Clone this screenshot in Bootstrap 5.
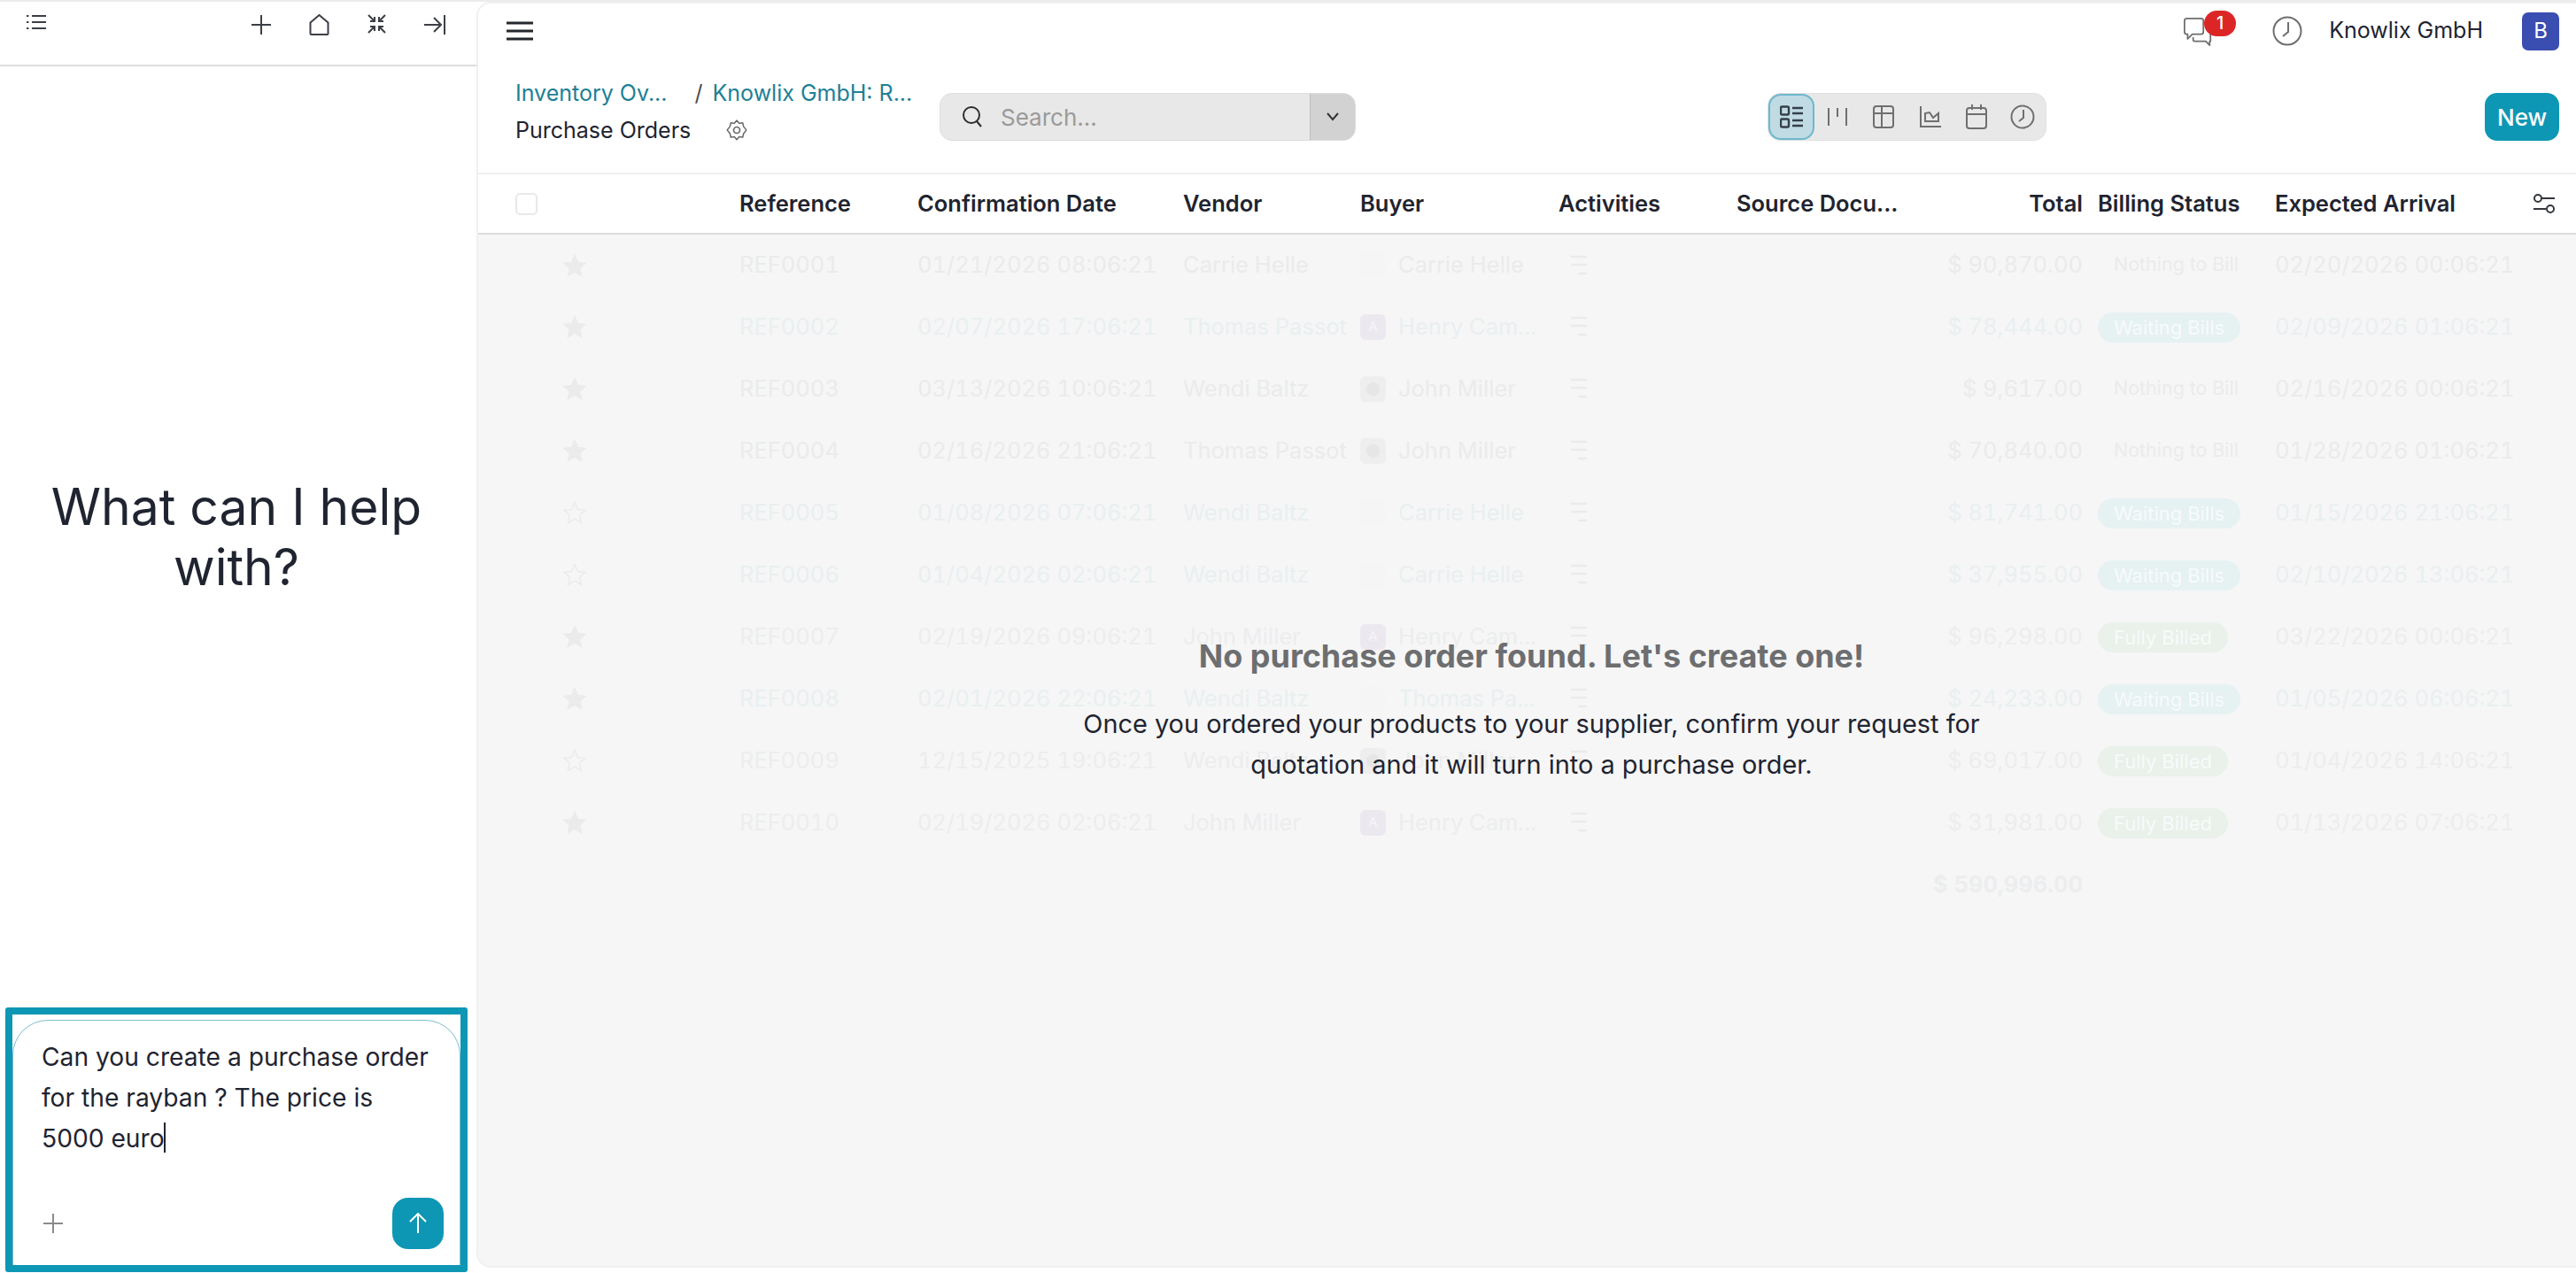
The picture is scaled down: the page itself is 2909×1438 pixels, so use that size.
<!DOCTYPE html>
<html lang="en">
<head>
    <meta charset="UTF-8">
    <meta name="viewport" content="width=device-width, initial-scale=1.0">
    <title>Purchase Orders</title>
    <link href="https://cdn.jsdelivr.net/npm/bootstrap@5.3.1/dist/css/bootstrap.min.css" rel="stylesheet">
    <style>
        html, body { height: 100%; }
        body { font-family: "Inter", "Liberation Sans", sans-serif; font-size: 25px; color: #1f2430; background: #fff; overflow: hidden; }
        svg { display: block; flex-shrink: 0; }
        .app-shell { height: 1438px; border-top: 2px solid #ececec; }

        .side-pane { width: 538px; flex-shrink: 0; }
        .side-top { height: 73px; border-bottom: 2px solid #dedede; padding: 14px 35px 0 30px; color: #3b3f46; }
        .side-tools { gap: 43px; }
        .help-title { font-size: 57px; font-weight: 400; line-height: 68px; color: #1f2430; margin: 0 4px 0 0; width: 460px; }
        .chat-frame { margin: 0 10px 1px 6px; height: 299px; border: 8px solid #0e97b4; border-radius: 3px; padding-top: 6px; overflow: hidden; }
        .chat-box { height: 320px; border: 1px solid #7cbccd; border-radius: 40px; padding: 18px 18px 0 32px; }
        .chat-text { font-size: 28.2px; line-height: 46px; color: #1f2430; height: 182px; padding-right: 12px; }
        .caret-bar { display: inline-block; width: 2px; height: 34px; background: #1f2430; vertical-align: -6px; margin-left: -1px; }
        .chat-plus { margin-left: 2px; }
        .send-btn { width: 58px; height: 58px; border-radius: 18px; background: #0e97b4; border: 0; padding: 0; }

        .main-pane { height: 1430px; border: 2px solid #f0f0f0; border-right: 0; border-radius: 16px 0 0 16px; overflow: hidden; min-width: 0; }
        .top-row { height: 62px; padding: 0 19px 0 32px; }
        .menu-bars { width: 30px; }
        .chat-alert { margin-right: 68px; }
        .note-badge { position: absolute; top: -6px; left: 23px; width: 36px; height: 29px; border-radius: 15px; background: #dc2626; color: #fff; font-size: 20px; line-height: 29px; text-align: center; font-weight: 500; }
        .company-name { margin-left: 30px; margin-right: 44px; color: #1f2430; }
        .user-tile { width: 42px; height: 43px; border-radius: 7px; background: #3a4db0; color: #fff; font-size: 24px; }
        .control-row { height: 131px; border-bottom: 2px solid #efefef; padding: 18px 19px 0 42px; }
        .crumb-col { width: 479px; flex-shrink: 0; }
        .crumb-link { color: #1e8096; }
        .crumb-sep { color: #4d4d4d; margin: 0 11px 0 31px; }
        .crumb-line { line-height: 42px; height: 42px; }
        .page-name { width: 238px; color: #1f2430; }
        .search-bar { width: 470px; height: 54px; margin-top: 21px; background: #e8e8e8; border: 1px solid #dcdcdc; border-radius: 14px; overflow: hidden; }
        .search-hint { color: #9a9a9a; margin-left: 20px; font-size: 26px; }
        .search-drop { width: 51px; background: #d2d2d2; border-left: 1px solid #bdbdbd; }
        .view-switch { margin-left: 465px; margin-top: 21px; width: 315px; height: 54px; background: #e8e8e8; border-radius: 14px; border: 1px solid #e0e0e0; }
        .view-btn { width: 52.5px; height: 52px; color: #6f6f6f; }
        .view-on { background: #c0dbe3; border: 2px solid #6db8cc; border-radius: 14px; color: #34404a; }
        .new-btn { width: 84px; height: 54px; margin-top: 21px; border-radius: 14px; background: #0e97b4; color: #fff; font-size: 26px; font-weight: 500; border: 0; padding: 0; }

        .list-wrap { background: #f6f6f6; flex-grow: 1; }
        .po-table { table-layout: fixed; width: 2369px; margin: 0; background: transparent; --bs-table-bg: transparent; font-size: 25.5px; }
        .po-table th { height: 67px; background: #fff; padding: 0; vertical-align: middle; font-weight: 600; font-size: 25.5px; color: #1f2430; border-bottom: 2px solid #dcdcdc; white-space: nowrap; }
        .po-table td { height: 70px; padding: 0; vertical-align: middle; white-space: nowrap; color: #eaebeb; background: transparent; overflow: hidden; font-variant-numeric: tabular-nums; }
        .po-table tr.row-wait td { color: #e9eff1; }
        .po-table tr.row-done td { color: #ecedee; }
        .po-table tr.row-sum td { font-weight: 700; color: #ecedee; }
        .col-check { width: 92px; padding-left: 42px !important; }
        .col-star { width: 203px; }
        .col-ref { width: 201px; }
        .col-date { width: 300px; }
        .col-vendor { width: 200px; }
        .col-buyer { width: 224px; }
        .col-act { width: 201px; }
        .col-source { width: 200px; }
        .col-total { width: 208px; padding-right: 17px !important; text-align: right; }
        .col-bill { width: 200px; }
        .col-arrive { width: 291px; }
        .col-tune { width: 49px; }
        .tick-box { width: 25px; height: 25px; border: 2px solid #e9e9e9; border-radius: 5px; background: #fff; }
        .star-cell { padding-left: 4px !important; }
        .act-cell { padding-left: 12px !important; }
        .buyer-wrap { gap: 14px; }
        .buyer-tile { width: 29px; height: 29px; border-radius: 6px; font-size: 15px; flex-shrink: 0; }
        .tile-pink { background: #ece8ef; color: #f6f6f6; }
        .tile-grey { background: #eeeeee; }
        .tile-dot { width: 15px; height: 15px; border-radius: 50%; background: #e6e6e6; }
        .tile-none { background: #f5f5f5; }
        .state-pill { display: inline-block; height: 34px; line-height: 34px; padding: 0 18px; border-radius: 17px; font-size: 22px; color: #f7fbfb; }
        .pill-wait { background: #e6f1f2; }
        .pill-done { background: #e9f1ea; }
        .pill-none { padding: 0 0 0 18px; color: #ebebeb; position: relative; top: -2px; font-size: 21.5px; }

        .empty-note { position: absolute; left: 0; right: -10px; top: 712px; text-align: center; }
        .empty-head { font-size: 36px; font-weight: 700; color: #6d6e70; line-height: 50px; margin-bottom: 29px; }
        .empty-text { font-size: 28.9px; line-height: 46px; color: #1f2430; width: 1060px; margin: 0 auto; }
    </style>
</head>
<body>
    <div class="app-shell d-flex">
        <aside class="side-pane d-flex flex-column">
            <div class="side-top d-flex justify-content-between">
                <svg width="22" height="18" viewBox="0 0 22 18" fill="none" stroke="#3b3f46" stroke-width="2"><path d="M6 2h16M6 9h16M6 16h16"/><path d="M0 2h3M0 9h3M0 16h3" stroke-dasharray="2.4 1"/></svg>
                <div class="side-tools d-flex">
                    <svg width="22" height="24" viewBox="0 0 22 24" fill="none" stroke="#3b3f46" stroke-width="2"><path d="M11 1v22M0 12h22"/></svg>
                    <svg width="23" height="24" viewBox="0 0 23 24" fill="none" stroke="#3b3f46" stroke-width="2" stroke-linejoin="round"><path d="M1.500 9.500 11.500 1l10 8.500V22a1 1 0 0 1-1 1h-18a1 1 0 0 1-1-1z"/></svg>
                    <svg width="21" height="22" viewBox="0 0 21 22" fill="none" stroke="#3b3f46" stroke-width="2"><path d="M1 1l7 7M8 3v5H3M20 1l-7 7M13 3v5h5M1 21l7-7M8 19v-5H3M20 21l-7-7M13 19v-5h5"/></svg>
                    <svg width="24" height="24" viewBox="0 0 24 24" fill="none" stroke="#3b3f46" stroke-width="2"><path d="M0 12h19M11 4l8 8-8 8M23 1v22"/></svg>
                </div>
            </div>
            <div class="flex-grow-1 d-flex align-items-center justify-content-center">
                <h1 class="help-title text-center">What can I help with?</h1>
            </div>
            <div class="chat-frame">
                <div class="chat-box">
                    <div class="chat-text">Can you create a purchase order for the rayban ? The price is 5000 euro<span class="caret-bar"></span></div>
                    <div class="d-flex justify-content-between align-items-center">
                        <svg class="chat-plus" width="22" height="22" viewBox="0 0 22 22" fill="none" stroke="#8b8b8b" stroke-width="2"><path d="M11 0v22M0 11h22"/></svg>
                        <button class="send-btn d-flex align-items-center justify-content-center" type="button" aria-label="Send">
                            <svg width="20" height="24" viewBox="0 0 20 24" fill="none" stroke="#fff" stroke-width="2"><path d="M10 23V2M1 10l9-9 9 9"/></svg>
                        </button>
                    </div>
                </div>
            </div>
        </aside>

        <main class="main-pane flex-grow-1 d-flex flex-column position-relative">
            <div class="top-row d-flex align-items-center justify-content-between">
                <svg class="menu-bars" width="30" height="22" viewBox="0 0 30 22" fill="none" stroke="#24272c" stroke-width="3"><path d="M0 2h30M0 11h30M0 20h30"/></svg>
                <div class="d-flex align-items-center">
                    <div class="chat-alert position-relative">
                        <svg width="32" height="34" viewBox="0 0 36 38" fill="none" stroke="#6e6e6e" stroke-width="2" stroke-linejoin="round"><path d="M22 3H4a3 3 0 0 0-3 3v14a3 3 0 0 0 3 3h1v6l6-6h11a3 3 0 0 0 3-3V6a3 3 0 0 0-3-3z"/><path d="M12 27v3a2 2 0 0 0 2 2h14l5 5v-5h1V14"/></svg>
                        <span class="note-badge">1</span>
                    </div>
                    <svg width="34" height="34" viewBox="0 0 34 34" fill="none" stroke="#6e6e6e" stroke-width="2"><circle cx="17" cy="17" r="15.500"/><path d="M18 7v11l-6 5"/></svg>
                    <span class="company-name">Knowlix GmbH</span>
                    <span class="user-tile d-flex align-items-center justify-content-center">B</span>
                </div>
            </div>

            <div class="control-row d-flex align-items-start">
                <div class="crumb-col">
                    <div class="crumb-line d-flex">
                        <span class="crumb-link">Inventory Ov...</span><span class="crumb-sep">/</span><span class="crumb-link">Knowlix GmbH: R...</span>
                    </div>
                    <div class="crumb-line d-flex align-items-center">
                        <span class="page-name">Purchase Orders</span>
                        <svg width="24" height="26" viewBox="0 0 24 26" fill="none" stroke="#6a6a6a" stroke-width="1.700" stroke-linejoin="round"><path d="M12 1l3 3.500 4.500-.5 1 4.500L24 13l-3.500 4.500-1 4.500-4.500-.5L12 25l-3-3.500-4.500.5-1-4.500L0 13l3.500-4.500 1-4.500 4.500.5z" transform="translate(1.200 1.200) scale(.9)"/><circle cx="12" cy="13" r="3.500"/></svg>
                    </div>
                </div>
                <div class="search-bar d-flex">
                    <div class="flex-grow-1 d-flex align-items-center ps-4">
                        <svg width="24" height="26" viewBox="0 0 24 26" fill="none" stroke="#2c2c2c" stroke-width="2"><circle cx="11" cy="11" r="9"/><path d="M17 18l5 6"/></svg>
                        <span class="search-hint">Search...</span>
                    </div>
                    <div class="search-drop d-flex align-items-center justify-content-center">
                        <svg width="14" height="10" viewBox="0 0 14 10" fill="none" stroke="#333" stroke-width="2"><path d="M1 1l6 7 6-7"/></svg>
                    </div>
                </div>
                <div class="view-switch d-flex">
                    <span class="view-btn view-on d-flex align-items-center justify-content-center">
                        <svg width="26" height="26" viewBox="0 0 26 26" fill="none" stroke="currentColor" stroke-width="2.400"><rect x="1" y="1.500" width="9" height="9" rx="1.500"/><rect x="1" y="15.500" width="9" height="9" rx="1.500"/><path d="M14 3h12M14 9h12M14 17h12M14 23h12"/></svg>
                    </span>
                    <span class="view-btn d-flex align-items-center justify-content-center">
                        <svg width="22" height="24" viewBox="0 0 22 24" fill="none" stroke="currentColor" stroke-width="2"><path d="M1 2v20M11 2v10M21 2v20"/></svg>
                    </span>
                    <span class="view-btn d-flex align-items-center justify-content-center">
                        <svg width="24" height="26" viewBox="0 0 24 26" fill="none" stroke="currentColor" stroke-width="2"><rect x="1" y="1" width="22" height="24" rx="3"/><path d="M1 9h22M10 1v24"/></svg>
                    </span>
                    <span class="view-btn d-flex align-items-center justify-content-center">
                        <svg width="26" height="26" viewBox="0 0 26 26" fill="none" stroke="currentColor" stroke-width="2"><path d="M2 1v23h23M7 9v9h15V9l-6 5-4-6z"/></svg>
                    </span>
                    <span class="view-btn d-flex align-items-center justify-content-center">
                        <svg width="24" height="28" viewBox="0 0 24 28" fill="none" stroke="currentColor" stroke-width="2"><rect x="1" y="4" width="22" height="23" rx="3"/><path d="M1 11h22M7 0v6M17 0v6"/></svg>
                    </span>
                    <span class="view-btn d-flex align-items-center justify-content-center">
                        <svg width="28" height="28" viewBox="0 0 28 28" fill="none" stroke="currentColor" stroke-width="2"><circle cx="14" cy="14" r="12.500"/><path d="M15 6v9l-5 4"/></svg>
                    </span>
                </div>
                <button class="new-btn ms-auto" type="button">New</button>
            </div>

            <div class="list-wrap">
                <table class="table table-borderless po-table">
                    <thead>
                        <tr>
                            <th class="col-check"><div class="tick-box"></div></th>
                            <th class="col-star"></th>
                            <th class="col-ref">Reference</th>
                            <th class="col-date">Confirmation Date</th>
                            <th class="col-vendor">Vendor</th>
                            <th class="col-buyer">Buyer</th>
                            <th class="col-act">Activities</th>
                            <th class="col-source">Source Docu...</th>
                            <th class="col-total">Total</th>
                            <th class="col-bill">Billing Status</th>
                            <th class="col-arrive">Expected Arrival</th>
                            <th class="col-tune">
                                <svg width="26" height="24" viewBox="0 0 26 24" fill="none" stroke="#33373d" stroke-width="2"><circle cx="6" cy="6" r="4"/><path d="M10 6h15M1 18h14"/><circle cx="20" cy="18" r="4"/></svg>
                            </th>
                        </tr>
                    </thead>
                    <tbody id="order-rows"></tbody>
                </table>
            </div>

            <div class="empty-note">
                <div class="empty-head">No purchase order found. Let's create one!</div>
                <p class="empty-text">Once you ordered your products to your supplier, confirm your request for quotation and it will turn into a purchase order.</p>
            </div>
        </main>
    </div>

    <script>
        const orders = [
            ["REF0001", "01/21/2026 08:06:21", "Carrie Helle", "Carrie Helle", "none", "$ 90,870.00", "Nothing to Bill", "02/20/2026 00:06:21", true],
            ["REF0002", "02/07/2026 17:06:21", "Thomas Passot", "Henry Cam...", "pink", "$ 78,444.00", "Waiting Bills", "02/09/2026 01:06:21", true],
            ["REF0003", "03/13/2026 10:06:21", "Wendi Baltz", "John Miller", "grey", "$ 9,617.00", "Nothing to Bill", "02/16/2026 00:06:21", true],
            ["REF0004", "02/16/2026 21:06:21", "Thomas Passot", "John Miller", "grey", "$ 70,840.00", "Nothing to Bill", "01/28/2026 01:06:21", true],
            ["REF0005", "01/08/2026 07:06:21", "Wendi Baltz", "Carrie Helle", "none", "$ 81,741.00", "Waiting Bills", "01/15/2026 21:06:21", false],
            ["REF0006", "01/04/2026 02:06:21", "Wendi Baltz", "Carrie Helle", "none", "$ 37,955.00", "Waiting Bills", "02/10/2026 13:06:21", false],
            ["REF0007", "02/19/2026 09:06:21", "John Miller", "Henry Cam...", "pink", "$ 96,298.00", "Fully Billed", "03/22/2026 00:06:21", true],
            ["REF0008", "02/01/2026 22:06:21", "Wendi Baltz", "Thomas Pa...", "none", "$ 24,233.00", "Waiting Bills", "01/05/2026 06:06:21", true],
            ["REF0009", "12/15/2025 19:06:21", "Wendi Baltz", "John Miller", "grey", "$ 69,017.00", "Fully Billed", "01/04/2026 14:06:21", false],
            ["REF0010", "02/19/2026 02:06:21", "John Miller", "Henry Cam...", "pink", "$ 31,981.00", "Fully Billed", "01/13/2026 07:06:21", true]
        ];

        const starPath = "M13 1.500l3.500 8 8.500.8-6.400 5.700 1.900 8.500L13 20.100 5.500 24.500l1.900-8.500L1 10.300l8.500-.8z";

        function starIcon(filled) {
            return `<svg width="26" height="26" viewBox="0 0 26 26" fill="${filled ? "#ebebeb" : "none"}" stroke="#ebebeb" stroke-width="1.500"><path d="${starPath}"/></svg>`;
        }

        function buyerTile(kind) {
            if (kind === "pink") return `<span class="buyer-tile tile-pink d-flex align-items-center justify-content-center">A</span>`;
            if (kind === "grey") return `<span class="buyer-tile tile-grey d-flex align-items-center justify-content-center"><span class="tile-dot"></span></span>`;
            return `<span class="buyer-tile tile-none"></span>`;
        }

        function billPill(status) {
            if (status === "Waiting Bills") return `<span class="state-pill pill-wait">${status}</span>`;
            if (status === "Fully Billed") return `<span class="state-pill pill-done">${status}</span>`;
            return `<span class="state-pill pill-none">${status}</span>`;
        }

        const actIcon = `<svg width="22" height="26" viewBox="0 0 22 26" fill="none" stroke="#ebebeb" stroke-width="2.500"><path d="M2 3h18M2 12h18M10 22h10"/></svg>`;

        const tbody = document.getElementById("order-rows");
        orders.forEach(o => {
            const rowClass = o[6] === "Waiting Bills" ? "row-wait" : (o[6] === "Fully Billed" ? "row-done" : "");
            tbody.innerHTML += `
                <tr class="${rowClass}">
                    <td></td>
                    <td class="star-cell">${starIcon(o[8])}</td>
                    <td>${o[0]}</td>
                    <td>${o[1]}</td>
                    <td>${o[2]}</td>
                    <td><div class="buyer-wrap d-flex align-items-center">${buyerTile(o[4])}<span>${o[3]}</span></div></td>
                    <td class="act-cell">${actIcon}</td>
                    <td></td>
                    <td class="col-total">${o[5]}</td>
                    <td>${billPill(o[6])}</td>
                    <td>${o[7]}</td>
                    <td></td>
                </tr>
            `;
        });
        tbody.innerHTML += `<tr class="row-sum"><td colspan="8"></td><td class="col-total">$ 590,996.00</td><td colspan="3"></td></tr>`;
    </script>

    <script src="https://cdn.jsdelivr.net/npm/bootstrap@5.3.1/dist/js/bootstrap.bundle.min.js"></script>
</body>
</html>
